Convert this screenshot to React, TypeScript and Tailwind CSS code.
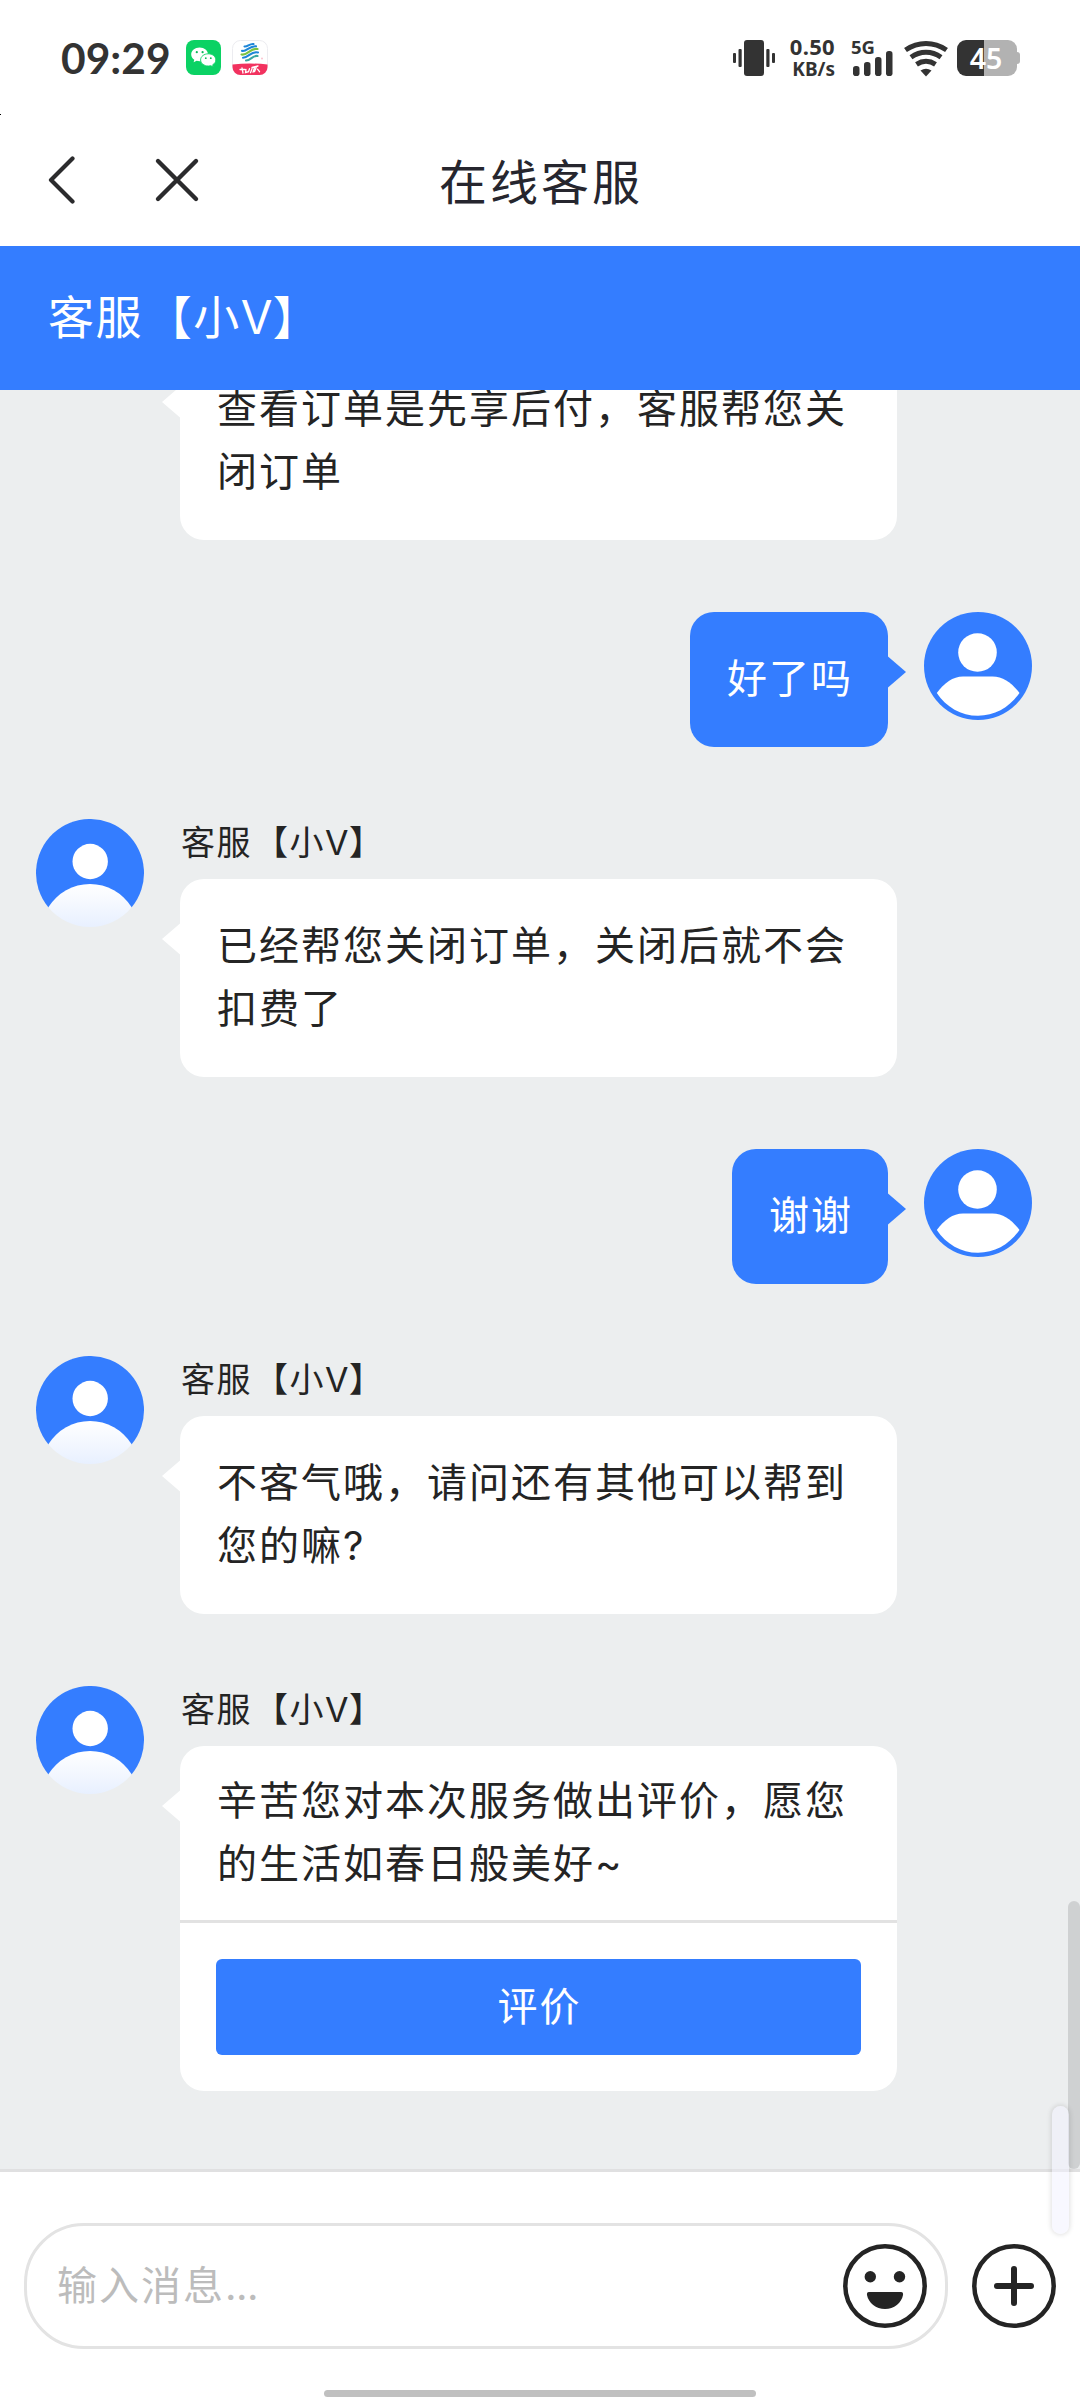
import type { ReactNode } from "react";

type Message = {
  from: "agent" | "user";
  lines: string[];
  hideName?: boolean;
  rate?: boolean;
};

const messages: Message[] = [
  // scrolled up so far that only its bubble is still in view
  { from: "agent", lines: ["查看订单是先享后付，客服帮您关", "闭订单"], hideName: true },
  { from: "user", lines: ["好了吗"] },
  { from: "agent", lines: ["已经帮您关闭订单，关闭后就不会", "扣费了"] },
  { from: "user", lines: ["谢谢"] },
  { from: "agent", lines: ["不客气哦，请问还有其他可以帮到", "您的嘛?"] },
  {
    from: "agent",
    lines: ["辛苦您对本次服务做出评价，愿您", "的生活如春日般美好~"],
    rate: true,
  },
];

function WeChatIcon() {
  return (
    <svg width="35" height="35" viewBox="0 0 35 35">
      <rect width="35" height="35" rx="8" fill="#0bd264" />
      <path
        d="M13.6 7.6c-4.7 0-8.4 3-8.4 6.8 0 2.200 1.200 4.100 3.100 5.300l-.7 2.600 3-1.500c.9.3 1.900.4 3 .4 4.700 0 8.400-3 8.400-6.800s-3.700-6.800-8.400-6.800z"
        fill="#fff"
      />
      <path
        d="M22.300 13.800c-4.300 0-7.700 2.700-7.700 6.100s3.400 6.100 7.700 6.100c.9 0 1.700-.1 2.500-.3l2.500 1.300-.6-2.200c1.900-1.100 3.100-2.900 3.100-4.900 0-3.400-3.300-6.100-7.500-6.100z"
        fill="#fff"
        stroke="#0bd264"
        strokeWidth="0.9"
      />
      <g fill="#0bb85a">
        <circle cx="10.800" cy="12.200" r="1.100" />
        <circle cx="16.600" cy="12.200" r="1.100" />
        <circle cx="19.800" cy="18.200" r="0.900" />
        <circle cx="24.800" cy="18.200" r="0.900" />
      </g>
    </svg>
  );
}

function ChinaMobileIcon() {
  return (
    <svg width="36" height="35" viewBox="0 0 36 35">
      <rect x="0.500" y="0.500" width="35" height="34" rx="8" fill="#fff" stroke="#ececf0" />
      <path d="M0.500 24.500Q18 22.600 35.500 24.500V27a8 8 0 0 1-8 8h-19a8 8 0 0 1-8-8z" fill="#f2325f" />
      <g fill="none" strokeWidth="2.100" strokeLinecap="round">
        <path d="M12.500 6.500c3 .5 5-3 9-2.500" stroke="#1d86d8" />
        <path d="M10 10.800c4 1.500 8-5.500 14-4.500" stroke="#1d86d8" />
        <path d="M9.500 14.500c6 1.500 9-7 16-5.500" stroke="#7cc242" />
        <path d="M11 17.700c6 0 8-7 15-5.200" stroke="#1d86d8" />
        <path d="M14 20.500c5 0 6.500-5.500 11.500-4.500" stroke="#3aa6a0" />
      </g>
      <path
        d="M8 29.500h5m-3-1.500l1 5m3-3.500l-.5 3 3-.8 1-3m2.500 0l-1.500 4m4-5l-1.500 4.500m3.500-5.500l-2 5m3-2.500l2 2.500M20 27.500l6-1.500"
        fill="none"
        stroke="#fff"
        strokeWidth="1.300"
        strokeLinecap="round"
      />
      <circle cx="30" cy="18.500" r="1" fill="#fbc3cf" />
    </svg>
  );
}

function VibrateIcon() {
  return (
    <svg width="42" height="36" viewBox="0 0 42 36" fill="#333">
      <rect x="11" width="20" height="36" rx="3" />
      <rect x="0" y="13" width="3" height="10" rx="1" />
      <rect x="5.500" y="9" width="3.200" height="18" rx="1" />
      <rect x="33.300" y="9" width="3.200" height="18" rx="1" />
      <rect x="39" y="13" width="3" height="10" rx="1" />
    </svg>
  );
}

function SignalBars() {
  return (
    <svg width="40" height="25" viewBox="0 0 40 25" fill="#333">
      <rect x="0" y="15" width="6.500" height="10" rx="2.800" />
      <rect x="11" y="11" width="6.500" height="14" rx="2.800" />
      <rect x="22" y="6" width="6.500" height="19" rx="2.800" />
      <rect x="33" y="0" width="6.500" height="25" rx="2.800" />
    </svg>
  );
}

function WifiIcon() {
  return (
    <svg width="44" height="37" viewBox="0 0 44 37" fill="none" stroke="#333" strokeWidth="5">
      <path d="M1.500 10Q11 3.500 22 3.500T42.500 10" />
      <path d="M7 17.300Q14 12.300 22 12.300T37 17.300" />
      <path d="M12.500 24.300Q17 21.300 22 21.300T31.500 24.300" />
      <path d="M16.500 30.500Q22 27 27.500 30.500L22 36.500z" fill="#333" stroke="none" />
    </svg>
  );
}

function Battery() {
  return (
    <div className="flex items-center">
      <div className="flex h-9 w-15 items-center justify-center rounded-[9px] bg-[linear-gradient(90deg,#333_45%,#b2b2b2_45%)] pr-[2px] font-['Noto_Sans',sans-serif] text-[28.500px] font-semibold leading-none text-white">
        45
      </div>
      <div className="h-3 w-[3px] rounded-r-sm bg-[#b2b2b2]" />
    </div>
  );
}

function StatusBar() {
  return (
    <div className="flex h-[114px] items-start text-[#333]">
      <div className="ml-[61px] mt-[33px] w-[125px] font-[Lato,sans-serif] text-[42.500px] font-bold leading-[50px]">
        09:29
      </div>
      <div className="mt-10 flex gap-[11px]">
        <WeChatIcon />
        <ChinaMobileIcon />
      </div>
      <div className="ml-auto mr-[60px] mt-10 flex items-start">
        <VibrateIcon />
        <div className="-mt-[6px] ml-3 flex w-[48px] flex-col items-end whitespace-nowrap font-['Noto_Sans',sans-serif] font-bold">
          <span className="text-[22px] leading-[25px] tracking-[0.300px]">0.50</span>
          <span className="text-[19px] leading-[21px]">KB/s</span>
        </div>
        <div className="ml-4 flex w-[44px] flex-col">
          <span className="-mt-[2px] h-[13px] font-['Noto_Sans',sans-serif] text-[18.500px] font-bold leading-[18px]">
            5G
          </span>
          <div className="ml-[2px]">
            <SignalBars />
          </div>
        </div>
        <div className="ml-[9px] mr-[9px]">
          <WifiIcon />
        </div>
        <Battery />
      </div>
    </div>
  );
}

function NavBar() {
  return (
    <div className="flex h-[132px] items-center">
      <svg className="ml-12" width="28" height="48" viewBox="0 0 28 48" fill="none" stroke="#2b2b2d" strokeWidth="4.200" strokeLinecap="round" strokeLinejoin="round">
        <path d="M24.500 2.500L3 24l21.500 21.500" />
      </svg>
      <svg className="ml-[77px]" width="48" height="48" viewBox="0 0 48 48" fill="none" stroke="#2b2b2d" strokeWidth="4.400" strokeLinecap="round">
        <path d="M5 5l38 38M43 5L5 43" />
      </svg>
      <h1 className="ml-[238px] pt-[5px] text-[48px] leading-[60px] tracking-[3px] text-[#26262e]">在线客服</h1>
    </div>
  );
}

function AgentName() {
  return (
    <>
      客服<span className="ml-[0.06em]">【小V</span>
      <span className="-ml-[0.03em]">】</span>
    </>
  );
}

function AgentAvatar() {
  return (
    <svg className="shrink-0" width="108" height="108" viewBox="0 0 108 108">
      <defs>
        <linearGradient id="body" x1="0" y1="0" x2="0" y2="1">
          <stop offset="0" stopColor="#fff" />
          <stop offset="1" stopColor="#e8f0ff" />
        </linearGradient>
      </defs>
      <path d="M12.300 88.300A54 54 0 1 1 95.700 88.300z" fill="#347dff" />
      <circle cx="54.200" cy="42.500" r="17.700" fill="#fff" />
      <path d="M12.300 88.300A49 49 0 0 1 95.700 88.300A54 54 0 0 1 12.300 88.300z" fill="url(#body)" />
    </svg>
  );
}

function UserAvatar() {
  return (
    <svg className="shrink-0" width="108" height="108" viewBox="0 0 108 108">
      <circle cx="54" cy="54" r="54" fill="#347dff" />
      <circle cx="53.500" cy="40.500" r="19.300" fill="#fff" />
      <path
        d="M12.800 81C20 71 29 64.500 39 64.500H68.500C79 64.500 88 71 95.500 81C86 95 71 103.800 54 103.800S22 95 12.800 81z"
        fill="#fff"
      />
    </svg>
  );
}

function Lines({ lines }: { lines: string[] }) {
  return (
    <>
      {lines.map((line) => (
        <p key={line} className="whitespace-nowrap text-[40px] leading-[63px] tracking-[2px]">
          {line}
        </p>
      ))}
    </>
  );
}

function AgentMessage({ hideName, children }: { hideName?: boolean; children: ReactNode }) {
  return (
    <div className="flex gap-9 pl-9 text-[#242424]">
      {hideName ? <div className="w-[108px] shrink-0" /> : <AgentAvatar />}
      <div className="w-[717px]">
        {!hideName && (
          <div className="h-[60px] pl-px text-[34px] leading-[48px] tracking-[1.500px]">
            <AgentName />
          </div>
        )}
        <div className="relative rounded-3xl bg-white">
          <svg className="absolute -left-[18px] top-11" width="19" height="32" viewBox="0 0 19 32" fill="#fff">
            <path d="M0 16L18 0.500H19V31.500H18z" />
          </svg>
          {children}
        </div>
      </div>
    </div>
  );
}

function UserMessage({ lines }: { lines: string[] }) {
  return (
    <div className="flex justify-end gap-9 pr-12">
      <div className="relative h-[135px] rounded-3xl bg-[#347dff] pb-9 pl-[37px] pr-[35px] pt-[35px] text-white">
        <Lines lines={lines} />
        <svg className="absolute -right-[18px] top-11" width="19" height="32" viewBox="0 0 19 32" fill="#347dff">
          <path d="M19 16L1 0.500H0V31.500H1z" />
        </svg>
      </div>
      <UserAvatar />
    </div>
  );
}

function MessageItem({ message }: { message: Message }) {
  if (message.from === "user") return <UserMessage lines={message.lines} />;
  if (message.rate) {
    return (
      <AgentMessage>
        <div className="border-b-[3px] border-[#e2e2e2] pb-[25px] pl-[37px] pt-[23px]">
          <Lines lines={message.lines} />
        </div>
        <div className="p-9">
          <button className="block h-24 w-full rounded-md bg-[#347dff] pl-[2px] text-[40px] leading-[96px] tracking-[2px] text-white">
            评价
          </button>
        </div>
      </AgentMessage>
    );
  }
  return (
    <AgentMessage hideName={message.hideName}>
      <div className="pb-[37px] pl-[37px] pt-[35px]">
        <Lines lines={message.lines} />
      </div>
    </AgentMessage>
  );
}

function Composer() {
  return (
    <div className="flex h-[231px] flex-col items-center border-t-[3px] border-[#e0e0e1] bg-white">
      <div className="mt-[51px] flex w-full items-center pl-6 pr-6">
        <div className="flex h-[126px] w-[924px] items-center justify-between rounded-[60px] border-[3px] border-[#e3e3e3] pl-[30px] pr-[18px]">
          <span className="text-[40px] leading-[60px] tracking-[2px] text-[#bcbcbc]">
            输入消息<span className="tracking-[-0.500px]">...</span>
          </span>
          <svg width="84" height="84" viewBox="0 0 84 84" fill="#242424">
            <circle cx="42" cy="42" r="39.700" fill="none" stroke="#242424" strokeWidth="4.500" />
            <circle cx="27.300" cy="32.700" r="5.700" />
            <circle cx="56.500" cy="32.700" r="5.700" />
            <path d="M26 48H58Q60.500 48 60 51C58.500 59 51 65 42 65S25.500 59 24 51Q23.500 48 26 48z" />
          </svg>
        </div>
        <svg className="ml-6" width="84" height="84" viewBox="0 0 84 84" fill="none" stroke="#242424">
          <circle cx="42" cy="42" r="39.700" strokeWidth="4.500" />
          <path d="M25 42H59M42 25V59" strokeWidth="6" strokeLinecap="round" />
        </svg>
      </div>
      <div className="mt-[41px] h-[7px] w-[432px] rounded-full bg-[#c0c0c0]" />
    </div>
  );
}

export default function App() {
  return (
    <div className="relative flex h-[2400px] w-[1080px] flex-col overflow-hidden bg-white font-[Inter,'Noto_Sans_CJK_SC',sans-serif]">
      <StatusBar />
      <NavBar />
      <header className="h-36 bg-[#347dff] pl-12 text-[46px] leading-[142px] tracking-[1.500px] text-white">
        <AgentName />
      </header>
      <main className="flex h-[1779px] flex-col justify-end gap-[72px] overflow-hidden bg-[#eceeef] pb-[78px]">
        {messages.map((message, i) => (
          <MessageItem key={i} message={message} />
        ))}
      </main>
      <Composer />
      {/* scroll thumb and the edge-gesture handle float over the page */}
      <div className="absolute right-0 top-[1901px] h-[268px] w-3 rounded-full bg-black/12" />
      <div className="absolute left-[1052px] top-[2106px] h-[128px] w-[17px] rounded-full bg-[#f2f2ff]/50 shadow-[0_0_5px_1px_rgba(0,0,0,0.12)]" />
      <div className="absolute left-0 top-[114px] h-px w-px bg-black" />
    </div>
  );
}
